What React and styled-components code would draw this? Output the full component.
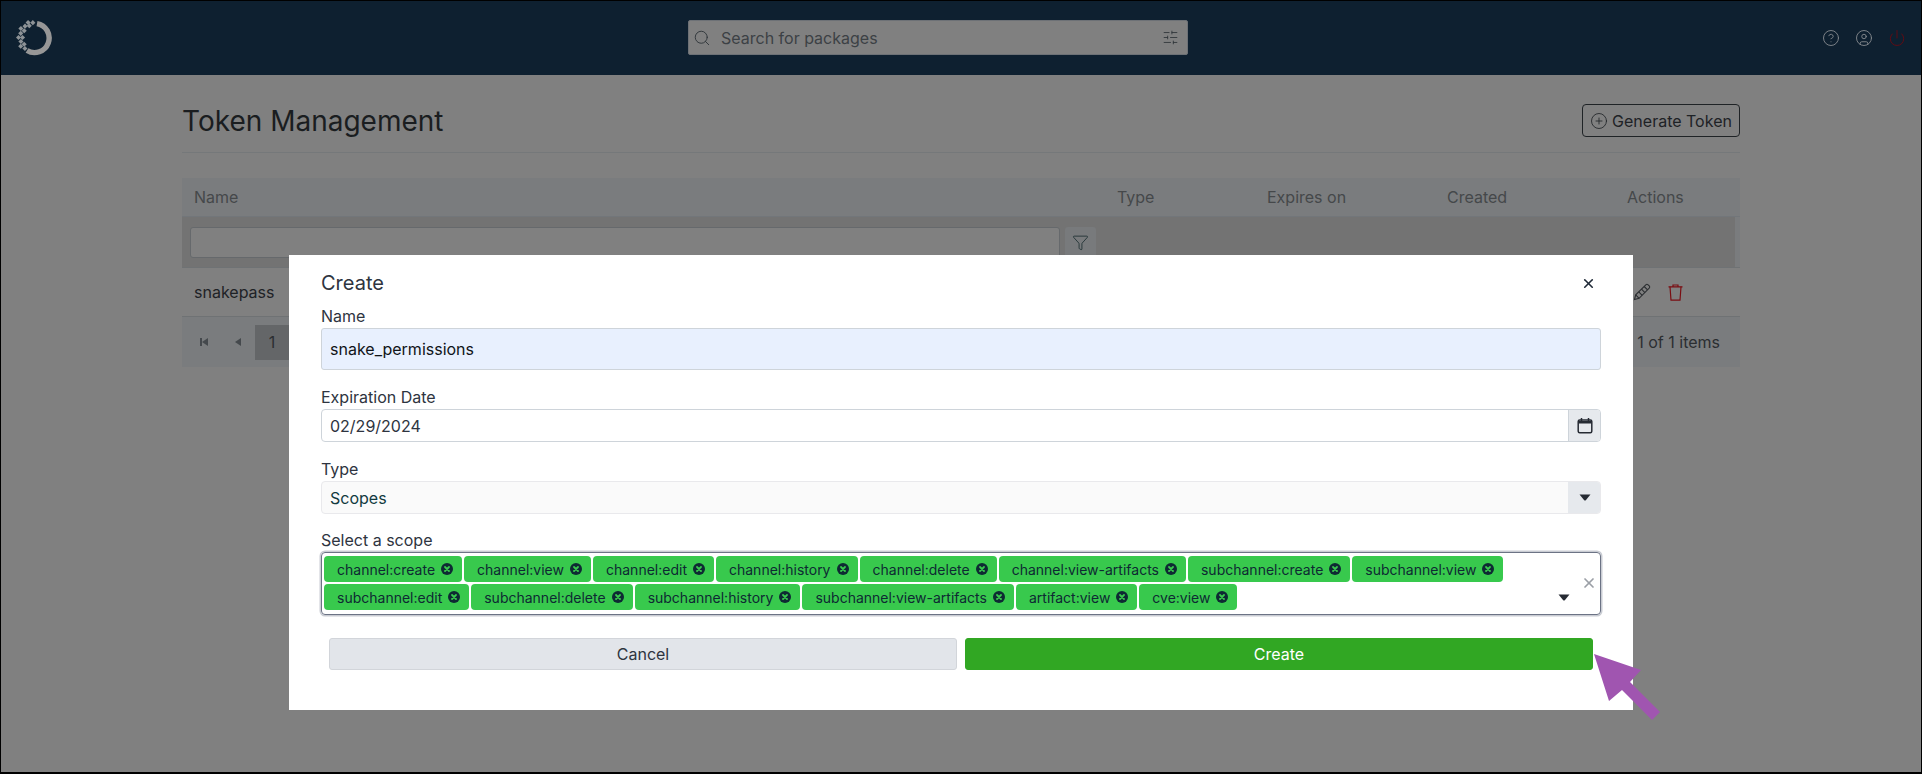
import styled, { createGlobalStyle } from "styled-components"
import { Search, SlidersHorizontal, CircleHelp, CircleUser, Power, CirclePlus, Funnel, X } from "lucide-react"

const SCOPES = [
	"channel:create",
	"channel:view",
	"channel:edit",
	"channel:history",
	"channel:delete",
	"channel:view-artifacts",
	"subchannel:create",
	"subchannel:view",
	"subchannel:edit",
	"subchannel:delete",
	"subchannel:history",
	"subchannel:view-artifacts",
	"artifact:view",
	"cve:view",
]

// lattice on the left of the logo ring: [screen angle, radius]
const LATTICE = [
	[262, 15.5], [245, 13.5], [246, 17], [230, 15.5], [214, 13], [214, 17],
	[198, 15], [182, 12.5], [182, 16.5], [166, 14.5], [150, 12.5], [150, 16.5],
	[134, 14.5],
]

const Logo = () => (
	<svg width="38" height="38" viewBox="0 0 38 38" fill="none">
		<path d="M21 4.6A14.6 14.6 0 1 1 11 31.5" stroke="#979797" strokeWidth="5.4" />
		{LATTICE.map(([angle, radius]) => {
			const x = 19 + radius * Math.cos((angle * Math.PI) / 180)
			const y = 19 + radius * Math.sin((angle * Math.PI) / 180)
			return <rect key={`${angle}-${radius}`} x={x - 1.8} y={y - 1.8} width="3.6" height="3.6" fill="#8d9296" transform={`rotate(45 ${x} ${y})`} />
		})}
	</svg>
)

const ChipClose = () => (
	<svg width="12" height="12" viewBox="0 0 12 12">
		<circle cx="6" cy="6" r="6" fill="#0e2a33" />
		<path d="M4 4l4 4M8 4l-4 4" stroke="#38c94d" strokeWidth="1.8" strokeLinecap="round" />
	</svg>
)

const Caret = () => (
	<svg width="12" height="7" viewBox="0 0 12 7">
		<path d="M0.5 0.5h11L7 6a1.4 1.4 0 0 1-2 0z" fill="#262b33" />
	</svg>
)

const CalendarIcon = () => (
	<svg width="16" height="17" viewBox="0 0 16 17" fill="none">
		<rect x="1.2" y="3" width="13.6" height="12.8" rx="1.5" stroke="#262b33" strokeWidth="1.5" />
		<path d="M1.5 5.2h13" stroke="#262b33" strokeWidth="2.6" />
		<path d="M4.5 1v3M11.5 1v3" stroke="#262b33" strokeWidth="1.5" />
	</svg>
)

const PencilIcon = () => (
	<svg width="18" height="18" viewBox="0 0 18 18" fill="none" stroke="#2b2e31" strokeWidth="1.1">
		<path d="M1.5 16.5l1.2-4.6L12.8 1.8a1.6 1.6 0 0 1 2.3 0l1.1 1.1a1.6 1.6 0 0 1 0 2.3L6.1 15.3z" />
		<path d="M11.2 3.5l3.4 3.4M2.7 11.9l3.4 3.4M8.5 6.2l3.4 3.4M5.8 8.9l3.4 3.4" />
	</svg>
)

const TrashIcon = () => (
	<svg width="15" height="17" viewBox="0 0 15 17" fill="none" stroke="#7a0d12" strokeWidth="1.2">
		<path d="M0.5 2.8h14M5 2.8V1h5v1.8" />
		<path d="M2 2.8l1 13.4h9l1-13.4" />
	</svg>
)

const App = () => {
	return (
		<>
			<GlobalStyle />
			<Page>
				<Header>
					<Logo />
					<SearchBox>
						<Search size={18} strokeWidth={1.2} />
						<SearchText>Search for packages</SearchText>
						<SlidersHorizontal size={17} strokeWidth={1.2} />
					</SearchBox>
					<HeaderIcons>
						<CircleHelp size={18} strokeWidth={1.2} />
						<CircleUser size={18} strokeWidth={1.2} />
						<Power size={18} strokeWidth={1.3} color="#620b14" />
					</HeaderIcons>
				</Header>
				<Main>
					<TitleBar>
						<Title>Token Management</Title>
						<GenerateButton>
							<CirclePlus size={18} strokeWidth={1.1} />
							Generate Token
						</GenerateButton>
					</TitleBar>
					<Table>
						<HeadRow>
							<span>Name</span>
							<span>Type</span>
							<span>Expires on</span>
							<span>Created</span>
							<span>Actions</span>
						</HeadRow>
						<FilterRow>
							<FilterInput />
							<FilterButton>
								<Funnel size={17} strokeWidth={1.1} />
							</FilterButton>
						</FilterRow>
						<BodyRow>
							<span>snakepass</span>
							<RowActions>
								<PencilIcon />
								<TrashIcon />
							</RowActions>
						</BodyRow>
						<Pager>
							<PagerLeft>
								<PagerArrow $first />
								<PagerArrow />
								<PageNumber>1</PageNumber>
							</PagerLeft>
							<span>1 of 1 items</span>
						</Pager>
					</Table>
				</Main>
				<Modal>
					<ModalHead>
						<ModalTitle>Create</ModalTitle>
						<CloseButton>
							<X size={15} strokeWidth={2.6} />
						</CloseButton>
					</ModalHead>
					<Field $gap={18}>
						<Label>Name</Label>
						<NameInput>snake_permissions</NameInput>
					</Field>
					<Field $gap={18}>
						<Label>Expiration Date</Label>
						<InputGroup>
							<GroupValue>02/29/2024</GroupValue>
							<GroupAddon>
								<CalendarIcon />
							</GroupAddon>
						</InputGroup>
					</Field>
					<Field $gap={17}>
						<Label>Type</Label>
						<InputGroup $soft>
							<GroupValue $teal>Scopes</GroupValue>
							<GroupAddon $soft>
								<Caret />
							</GroupAddon>
						</InputGroup>
					</Field>
					<Field $gap={23}>
						<Label>Select a scope</Label>
						<ScopeBox>
							{SCOPES.map((scope) => (
								<Chip key={scope}>
									{scope}
									<ChipClose />
								</Chip>
							))}
							<ClearIcon>
								<X size={16} strokeWidth={2.6} />
							</ClearIcon>
							<ScopeCaret>
								<Caret />
							</ScopeCaret>
						</ScopeBox>
					</Field>
					<Buttons>
						<CancelButton>Cancel</CancelButton>
						<CreateButton>Create</CreateButton>
					</Buttons>
				</Modal>
				<Pointer viewBox="0 0 70 70" width="70" height="70">
					<path d="M1 1L48 17L37 29L67 59L59 67L29 37L16 48z" fill="#a055b0" />
				</Pointer>
			</Page>
		</>
	)
}

const GlobalStyle = createGlobalStyle`
	html, body {
		margin: 0;
		background: #808080;
	}
	* {
		box-sizing: border-box;
	}
`

const Page = styled.div`
	position: relative;
	width: 1922px;
	height: 774px;
	overflow: hidden;
	background: #808080;
	font-family: Inter, "Liberation Sans", sans-serif;
	font-size: 16px;
	color: #1e2226;
	&::after {
		content: "";
		position: absolute;
		inset: 0;
		border: 1px solid #000;
		border-bottom-width: 2px;
		pointer-events: none;
	}
`

const Header = styled.header`
	height: 75px;
	padding: 0 16px;
	background: #0e2030;
	display: grid;
	grid-template-columns: 672px 500px 1fr;
	align-items: center;
	svg {
		display: block;
	}
`

const SearchBox = styled.div`
	height: 35px;
	padding: 0 8px 0 4px;
	display: flex;
	align-items: center;
	background: #808080;
	border: 1px solid #6d7176;
	border-radius: 2px;
	color: #2d3338;
`

const SearchText = styled.span`
	flex: 1;
	margin-left: 10px;
	color: #3c4145;
`

const HeaderIcons = styled.div`
	justify-self: end;
	display: flex;
	gap: 15px;
	color: #868a8e;
`

const Main = styled.main`
	padding: 29px 182px 0 182px;
`

const TitleBar = styled.div`
	height: 49px;
	padding-bottom: 15px;
	display: flex;
	justify-content: space-between;
	align-items: center;
	border-bottom: 1px solid #75787a;
`

const Title = styled.h1`
	margin: 0;
	font-size: 28px;
	font-weight: 400;
	color: #1a1d20;
`

const GenerateButton = styled.button`
	width: 158px;
	height: 33px;
	padding: 0;
	display: flex;
	align-items: center;
	justify-content: center;
	gap: 4px;
	background: transparent;
	border: 1px solid #1f2326;
	border-radius: 4px;
	font: inherit;
	color: #1e2226;
`

const Table = styled.div`
	margin-top: 25px;
	background: #7a7c7e;
`

const HeadRow = styled.div`
	height: 39px;
	padding-left: 12px;
	display: grid;
	grid-template-columns: 923px 150px 180px 180px 124px;
	align-items: center;
	color: #45484a;
	border-bottom: 1px solid #72767a;
`

const FilterRow = styled.div`
	height: 50px;
	margin-right: 5px;
	padding: 10px 0 0 8px;
	display: flex;
	gap: 5px;
	background: #737373;
	align-items: flex-start;
`

const FilterInput = styled.div`
	width: 870px;
	height: 31px;
	background: #808080;
	border: 1px solid #66696c;
	border-radius: 3px;
`

const FilterButton = styled.div`
	width: 31px;
	height: 31px;
	display: flex;
	align-items: center;
	justify-content: center;
	background: #787a7c;
	border-radius: 3px;
	color: #14282a;
`

const BodyRow = styled.div`
	height: 50px;
	padding-left: 12px;
	display: flex;
	justify-content: space-between;
	align-items: center;
	background: #808080;
	border-top: 1px solid #6f7274;
	border-bottom: 1px solid #6f7274;
`

const RowActions = styled.div`
	display: flex;
	align-items: center;
	gap: 17px;
	padding-right: 57px;
`

const Pager = styled.div`
	height: 50px;
	padding: 0 20px 0 0;
	display: flex;
	justify-content: space-between;
	align-items: center;
	color: #2b2e31;
`

const PagerLeft = styled.div`
	display: flex;
	align-items: center;
	padding-left: 5px;
`

const PagerArrow = styled.span`
	width: 34px;
	height: 35px;
	display: flex;
	align-items: center;
	justify-content: center;
	&::before {
		content: "";
		width: 0;
		height: 0;
		border-top: 4px solid transparent;
		border-bottom: 4px solid transparent;
		border-right: 6px solid #45494d;
		${(p) => (p.$first ? "box-shadow: -2px 0 0 #45494d; margin-left: 2px;" : "")}
	}
`

const PageNumber = styled.span`
	width: 34px;
	height: 35px;
	display: flex;
	align-items: center;
	justify-content: center;
	background: #646668;
`

const Modal = styled.section`
	position: absolute;
	left: 289px;
	top: 255px;
	width: 1344px;
	height: 455px;
	padding: 16px 32px 0;
	background: #fff;
	color: #2e3440;
`

const ModalHead = styled.div`
	height: 24px;
	margin-bottom: 12px;
	display: flex;
	justify-content: space-between;
	align-items: center;
`

const ModalTitle = styled.h2`
	margin: 0;
	font-size: 20px;
	font-weight: 400;
`

const CloseButton = styled.div`
	display: flex;
	color: #1f2937;
	margin-right: 5px;
`

const Field = styled.div`
	margin-bottom: ${(p) => p.$gap}px;
`

const Label = styled.div`
	height: 19px;
	line-height: 19px;
	margin-bottom: 2px;
`

const NameInput = styled.div`
	height: 42px;
	padding: 0 8px;
	display: flex;
	align-items: center;
	background: #e8f0fe;
	border: 1px solid #ced4da;
	border-radius: 3px;
	color: #101418;
`

const InputGroup = styled.div`
	height: 33px;
	display: flex;
	overflow: hidden;
	background: ${(p) => (p.$soft ? "#fafafa" : "#fff")};
	border: 1px solid ${(p) => (p.$soft ? "#e9e9ec" : "#ced4da")};
	border-radius: 4px;
`

const GroupValue = styled.div`
	flex: 1;
	padding: 0 8px;
	display: flex;
	align-items: center;
	color: ${(p) => (p.$teal ? "#123a3f" : "#2e3440")};
`

const GroupAddon = styled.div`
	width: 32px;
	display: flex;
	align-items: center;
	justify-content: center;
	background: #e6e9ed;
	border-left: 1px solid ${(p) => (p.$soft ? "#e6e9ed" : "#ced4da")};
`

const ScopeBox = styled.div`
	position: relative;
	height: 63px;
	padding: 3px 70px 3px 2px;
	display: flex;
	flex-wrap: wrap;
	align-content: flex-start;
	gap: 2px;
	border: 1px solid #6c7385;
	border-radius: 4px;
	box-shadow: 0 0 0 1.5px #c9ccd3;
`

const Chip = styled.div`
	height: 26px;
	padding: 0 9px 0 13px;
	display: flex;
	align-items: center;
	gap: 6px;
	background: #38c94d;
	border-radius: 4px;
	font-size: 14px;
	color: #0e2a33;
`

const ClearIcon = styled.span`
	position: absolute;
	right: 3px;
	top: 22px;
	display: flex;
	color: #9b9fa6;
`

const ScopeCaret = styled.span`
	position: absolute;
	right: 30px;
	top: 41px;
	display: flex;
`

const Buttons = styled.div`
	padding: 0 8px;
	display: flex;
	gap: 8px;
`

const CancelButton = styled.button`
	flex: 1;
	height: 32px;
	padding: 0;
	background: #e2e5ea;
	border: 1px solid #d2d5da;
	border-radius: 3px;
	font: inherit;
	font-size: 16px;
	color: #2e3440;
`

const CreateButton = styled(CancelButton)`
	background: #31a723;
	border-color: #31a723;
	color: #fff;
`

const Pointer = styled.svg`
	position: absolute;
	left: 1593px;
	top: 653px;
`

export default App
